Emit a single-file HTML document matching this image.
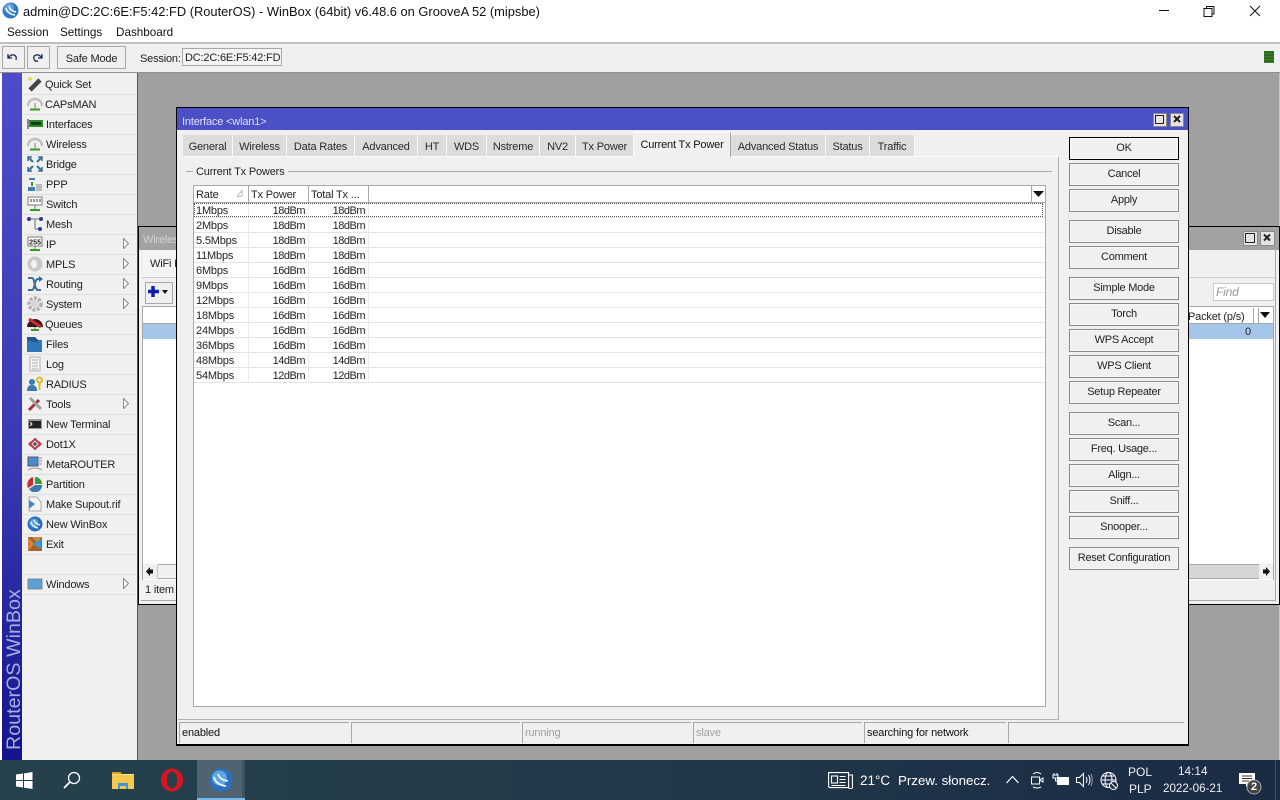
<!DOCTYPE html>
<html><head><meta charset="utf-8"><title>WinBox</title>
<style>
html,body{margin:0;padding:0;width:1280px;height:800px;overflow:hidden;background:#fff}
body{position:relative;font:11px/14px "Liberation Sans",sans-serif;color:#1a1a1a;letter-spacing:-.18px}
div,svg{position:absolute}
.t{white-space:nowrap;line-height:14px;height:14px}
.m{left:46px;margin-top:1px;white-space:nowrap;height:14px;line-height:14px;font-size:11px;color:#222}
.s{left:24px;width:112px;height:1px;background:#dedede}
.i{left:26px;width:16px;height:16px}
.ar{left:123px;width:6px;height:11px}
.b{left:1069px;width:108px;height:21px;border:1px solid #8a8a8a;text-align:center;line-height:21px;font-size:11px;letter-spacing:-.25px;background:#f0f0f0;color:#222;box-shadow:inset 0 0 0 1px #f8f8f8}
.tab{top:135px;height:21px;background:#dcdcdc;border-right:1px solid #fafafa;text-align:center;line-height:24px;font-size:11px;color:#2a2a2a;box-sizing:border-box}
.r{left:196px;margin-top:1px;white-space:nowrap;height:14px;line-height:14px;color:#222}
.p{margin-top:1px;white-space:nowrap;height:14px;line-height:14px;text-align:right;width:50px;color:#222;letter-spacing:-.5px}
.l{left:194px;width:851px;height:1px;background:#e4e4e4}
.h{top:186px;height:16px;background:#fff;border-right:1px solid #a8a8a8;box-sizing:border-box;line-height:19px;padding-left:2px;color:#222;white-space:nowrap;overflow:hidden}
.st{top:722px;height:21px;border-left:1px solid #a8a8a8;border-top:1px solid #a8a8a8;box-sizing:border-box;line-height:19px;padding-left:2px;white-space:nowrap;color:#111}
.tw{color:#fff;white-space:nowrap;height:16px;line-height:16px;letter-spacing:0}
</style></head><body>

<!-- title bar -->
<svg style="left:2px;top:2px" width="17" height="17" viewBox="0 0 17 17"><circle cx="8.500" cy="8.500" r="8" fill="#2f78c4"/><circle cx="7" cy="6" r="5" fill="#5fa4e0"/><path d="M4 6q1 6 9 7M7 4q1 5 7 6" stroke="#fff" stroke-width="1.400" fill="none"/></svg>
<div class="t" style="left:23px;top:5px;font-size:12.870px;letter-spacing:0;color:#111">admin@DC:2C:6E:F5:42:FD (RouterOS) - WinBox (64bit) v6.48.6 on GrooveA 52 (mipsbe)</div>
<svg style="left:1159px;top:5px" width="110" height="14" viewBox="0 0 110 14" fill="none" stroke="#111"><path d="M0 5.500H10"/><path d="M45 3.500h8v8h-8zM47.500 3V1.500h7.500v7.500h-1.500"/><path d="M91 1l10 10M101 1L91 11"/></svg>
<div class="t" style="left:7px;top:26px;font-size:11.700px;letter-spacing:0;color:#111">Session</div>
<div class="t" style="left:60px;top:26px;font-size:11.700px;letter-spacing:0;color:#111">Settings</div>
<div class="t" style="left:116px;top:26px;font-size:11.700px;letter-spacing:0;color:#111">Dashboard</div>

<!-- toolbar -->
<div style="left:0;top:42px;width:1280px;height:2px;background:#c0c0c0"></div>
<div style="left:0;top:44px;width:1280px;height:28px;background:#f0f0f0"></div>
<div style="left:0;top:72px;width:1280px;height:1px;background:#909090"></div>
<div style="left:2px;top:46px;width:21px;height:21px;border:1px solid #a8a8a8"></div>
<div style="left:27px;top:46px;width:21px;height:21px;border:1px solid #a8a8a8"></div>
<svg style="left:6px;top:51px" width="40" height="12" viewBox="0 0 40 12" fill="none" stroke="#1c2a5c" stroke-width="1.300"><path d="M2 3v4h4M2 7q3-4 6-3t2 5"/><path d="M32 7h4V3M36 7q-3-4-6-3t-2 4 4 2"/></svg>
<div style="left:57px;top:46px;width:67px;height:21px;border:1px solid #a8a8a8;text-align:center;line-height:24px;font-size:11px;color:#222">Safe Mode</div>
<div class="t" style="left:140px;top:52px;color:#222">Session:</div>
<div style="left:182px;top:48px;width:96px;height:16px;border:1px solid #a8a8a8;background:#f4f4f4;line-height:18px;padding-left:2px;color:#222;white-space:nowrap">DC:2C:6E:F5:42:FD</div>
<div style="left:1264px;top:51px;width:10px;height:12px;background:repeating-linear-gradient(#2e6b1e 0,#2e6b1e 2px,#3f7d2c 2px,#3f7d2c 3px)"></div>

<!-- left -->
<div style="left:0;top:73px;width:2px;height:687px;background:#fff"></div>
<div style="left:2px;top:73px;width:20px;height:687px;background:linear-gradient(#4c4cc8 0,#3a3ab4 55%,#14148c 100%)"></div>
<div style="left:22px;top:73px;width:115px;height:687px;background:#f0f0f0"></div>
<div style="left:137px;top:73px;width:1px;height:687px;background:#555"></div>
<div style="left:-76px;top:648px;width:180px;height:24px;line-height:24px;font-size:19.700px;letter-spacing:0;color:#a6aee0;transform:rotate(-90deg);text-align:left;white-space:nowrap">RouterOS WinBox</div>

<!-- desktop -->
<div style="left:138px;top:73px;width:1142px;height:687px;background:#a0a0a0"></div>
<div style="left:1279px;top:73px;width:1px;height:687px;background:#c8c8c8"></div>

<!-- menu -->
<div class="s" style="top:94px"></div><div class="s" style="top:114px"></div><div class="s" style="top:134px"></div><div class="s" style="top:154px"></div><div class="s" style="top:174px"></div><div class="s" style="top:194px"></div><div class="s" style="top:214px"></div><div class="s" style="top:234px"></div><div class="s" style="top:254px"></div><div class="s" style="top:274px"></div><div class="s" style="top:294px"></div><div class="s" style="top:314px"></div><div class="s" style="top:334px"></div><div class="s" style="top:354px"></div><div class="s" style="top:374px"></div><div class="s" style="top:394px"></div><div class="s" style="top:414px"></div><div class="s" style="top:434px"></div><div class="s" style="top:454px"></div><div class="s" style="top:474px"></div><div class="s" style="top:494px"></div><div class="s" style="top:514px"></div><div class="s" style="top:534px"></div><div class="s" style="top:554px"></div><div class="s" style="top:574px"></div><div class="s" style="top:594px"></div>

<div class="m" style="top:77px;left:45px">Quick Set</div>
<div class="m" style="top:97px;left:45px">CAPsMAN</div>
<div class="m" style="top:117px">Interfaces</div>
<div class="m" style="top:137px">Wireless</div>
<div class="m" style="top:157px">Bridge</div>
<div class="m" style="top:177px">PPP</div>
<div class="m" style="top:197px">Switch</div>
<div class="m" style="top:217px">Mesh</div>
<div class="m" style="top:237px">IP</div>
<div class="m" style="top:257px">MPLS</div>
<div class="m" style="top:277px">Routing</div>
<div class="m" style="top:297px">System</div>
<div class="m" style="top:317px;left:45px">Queues</div>
<div class="m" style="top:337px">Files</div>
<div class="m" style="top:357px">Log</div>
<div class="m" style="top:377px">RADIUS</div>
<div class="m" style="top:397px">Tools</div>
<div class="m" style="top:417px">New Terminal</div>
<div class="m" style="top:437px">Dot1X</div>
<div class="m" style="top:457px">MetaROUTER</div>
<div class="m" style="top:477px">Partition</div>
<div class="m" style="top:497px">Make Supout.rif</div>
<div class="m" style="top:517px">New WinBox</div>
<div class="m" style="top:537px">Exit</div>
<div class="m" style="top:577px">Windows</div>

<svg class="ar" style="top:238px" viewBox="0 0 6 11"><path d="M.5.500l5 5-5 5z" fill="#fff" stroke="#888"/></svg>
<svg class="ar" style="top:258px" viewBox="0 0 6 11"><path d="M.5.500l5 5-5 5z" fill="#fff" stroke="#888"/></svg>
<svg class="ar" style="top:278px" viewBox="0 0 6 11"><path d="M.5.500l5 5-5 5z" fill="#fff" stroke="#888"/></svg>
<svg class="ar" style="top:298px" viewBox="0 0 6 11"><path d="M.5.500l5 5-5 5z" fill="#fff" stroke="#888"/></svg>
<svg class="ar" style="top:398px" viewBox="0 0 6 11"><path d="M.5.500l5 5-5 5z" fill="#fff" stroke="#888"/></svg>
<svg class="ar" style="top:578px" viewBox="0 0 6 11"><path d="M.5.500l5 5-5 5z" fill="#fff" stroke="#888"/></svg>

<!-- menu icons -->
<svg class="i" style="top:76px;left:27px" viewBox="0 0 16 16"><path d="M3 14L13 4" stroke="#444" stroke-width="4.500"/><path d="M3 0l1 2 2 1-2 1-1 2-1-2-2-1 2-1z" fill="#e8d840"/></svg>
<svg class="i" style="top:96px;left:27px" viewBox="0 0 16 16" fill="none"><path d="M1 10a7 7 0 0 1 14 0" stroke="#c0c0c0" stroke-width="2.500"/><path d="M8 7v6" stroke="#777"/><path d="M3 13.500h10" stroke="#3a9a2a" stroke-width="2"/></svg>
<svg class="i" style="top:116px;left:27px" viewBox="0 0 16 16"><rect x="0" y="3" width="2" height="10" fill="#888"/><rect x="2" y="4" width="14" height="7" fill="#2f8a2a"/><rect x="4" y="6" width="10" height="3" fill="#143f14"/></svg>
<svg class="i" style="top:136px;left:27px" viewBox="0 0 16 16" fill="none"><path d="M1 10a7 7 0 0 1 14 0" stroke="#c0c0c0" stroke-width="2.500"/><path d="M8 7v6" stroke="#777"/><path d="M3 13.500h10" stroke="#3a9a2a" stroke-width="2"/></svg>
<svg class="i" style="top:156px;left:27px" viewBox="0 0 16 16" fill="none" stroke="#3f6f96" stroke-width="2.200"><path d="M1 1l5 5M15 1l-5 5M1 15l5-5M15 15l-5-5"/><path d="M1 5V1h4M15 5V1h-4M1 11v4h4M15 11v4h-4" stroke-width="1.500"/></svg>
<svg class="i" style="top:176px;left:27px" viewBox="0 0 16 16"><path d="M2 3h6" stroke="#3f7fb8" stroke-width="2"/><path d="M5 6v4" stroke="#3a9a2a" stroke-width="2"/><rect x="1" y="11" width="7" height="4" fill="#3f7fb8"/><rect x="9" y="8" width="6" height="7" fill="#bbb"/></svg>
<svg class="i" style="top:196px;left:27px" viewBox="0 0 16 16"><rect x="1" y="1" width="14" height="8" fill="#fff" stroke="#777"/><path d="M4 3v3M7 3v3M10 3v3M13 3v3" stroke="#333"/><path d="M8 9v4" stroke="#777"/><path d="M3 14h10" stroke="#3a9a2a" stroke-width="2"/></svg>
<svg class="i" style="top:216px;left:27px" viewBox="0 0 16 16"><path d="M3 3h10M8 3v10M8 13h5" stroke="#999" stroke-width="1.500" fill="none"/><circle cx="2" cy="3" r="2" fill="#2a3a90"/><circle cx="14" cy="3" r="2" fill="#2a3a90"/><circle cx="13" cy="13" r="2" fill="#2a3a90"/></svg>
<svg class="i" style="top:236px;left:27px" viewBox="0 0 16 16"><rect x="1" y="1" width="14" height="9" fill="#fff" stroke="#777"/><text x="8" y="8.500" font-family="Liberation Mono" font-size="7" font-weight="bold" text-anchor="middle" fill="#222">255</text><path d="M8 10v3" stroke="#777"/><path d="M3 14h10" stroke="#3a9a2a" stroke-width="2"/></svg>
<svg class="i" style="top:256px;left:27px" viewBox="0 0 16 16"><circle cx="8" cy="8" r="7.500" fill="#c8c8c8"/><ellipse cx="7" cy="8" rx="3" ry="4.500" fill="#f2f2f2"/></svg>
<svg class="i" style="top:276px;left:27px" viewBox="0 0 16 16" fill="none" stroke="#3f6f96" stroke-width="2"><path d="M1 2h4c3 0 2 12 6 12h3M1 14h4c3 0 2-11 6-11h3"/><path d="M12 0l4 3-4 3z" fill="#2a6a96" stroke="none"/></svg>
<svg class="i" style="top:296px;left:27px" viewBox="0 0 16 16"><circle cx="8" cy="8" r="6" fill="none" stroke="#b0b0b0" stroke-width="3.500" stroke-dasharray="3 1.500"/><circle cx="8" cy="8" r="4" fill="#d8d8d8"/></svg>
<svg class="i" style="top:316px;left:27px" viewBox="0 0 16 16"><path d="M0 11a8 8 0 0 1 16 0z" fill="#3a1818"/><path d="M2 3l12 8" stroke="#c83030" stroke-width="3"/><path d="M8 11v2" stroke="#777"/><path d="M4 14h8" stroke="#3a9a2a" stroke-width="2"/></svg>
<svg class="i" style="top:336px;left:27px" viewBox="0 0 16 16"><path d="M0 1h8l3 3h4v12H0z" fill="#2f78b8"/><path d="M0 1h8l3 3v3L3 5H0z" fill="#1f5a94"/></svg>
<svg class="i" style="top:356px;left:27px" viewBox="0 0 16 16"><rect x="3" y="1" width="10" height="14" fill="#f4f4f4" stroke="#b0b0b0"/><path d="M5 4h6M5 7h6M5 10h6M5 13h6" stroke="#b0b0b0"/></svg>
<svg class="i" style="top:376px;left:27px" viewBox="0 0 16 16"><circle cx="5" cy="6" r="3" fill="#3a7ab0"/><path d="M0 15q0-6 5-6t5 6z" fill="#3a7ab0"/><circle cx="12.500" cy="4" r="2.500" fill="none" stroke="#e0b820" stroke-width="2"/><path d="M12.500 7v7" stroke="#e0b820" stroke-width="2"/></svg>
<svg class="i" style="top:396px;left:27px" viewBox="0 0 16 16"><path d="M2 14L12 4" stroke="#9a3040" stroke-width="3"/><path d="M3 2l11 11" stroke="#a0a0a0" stroke-width="3"/></svg>
<svg class="i" style="top:416px;left:27px" viewBox="0 0 16 16"><rect x="1" y="3" width="14" height="10" fill="#999"/><rect x="2" y="5" width="12" height="7" fill="#222"/><path d="M3 6l2 2-2 2" stroke="#fff" fill="none"/></svg>
<svg class="i" style="top:436px;left:27px" viewBox="0 0 16 16"><path d="M8 3l5 5-5 5-5-5z" fill="none" stroke="#c03a4a" stroke-width="2"/><path d="M1 8l3-3v6zM15 8l-3-3v6z" fill="#c03a4a"/><circle cx="8" cy="8" r="1.800" fill="#555"/></svg>
<svg class="i" style="top:456px;left:27px" viewBox="0 0 16 16"><rect x="1" y="1" width="10" height="9" fill="#4a8ac8" stroke="#557"/><path d="M12 2h3M12 5h3M12 8h3" stroke="#888"/><path d="M1 14q7-4 14 0" stroke="#999" fill="none"/></svg>
<svg class="i" style="top:476px;left:27px" viewBox="0 0 16 16"><path d="M6 1A8 8 0 0 0 1 12l5-3z" fill="#c83030"/><path d="M8 1v7h7A7 7 0 0 0 8 1z" fill="#3a9a3a"/><path d="M2 13l6-4h7a7 7 0 0 1-13 4z" fill="#3a7ab0"/></svg>
<svg class="i" style="top:496px;left:27px" viewBox="0 0 16 16"><path d="M2 1h8l4 5v9H2z" fill="#f4f4f4" stroke="#aaa"/><path d="M2 4l6 4-6 5z" fill="#3a8ac8"/></svg>
<svg class="i" style="top:516px;left:27px" viewBox="0 0 16 16"><circle cx="8" cy="8" r="7.500" fill="#2f6fb8"/><circle cx="7" cy="7" r="4.500" fill="#5fa4e0"/><path d="M4 6q1 5 7 6M7 4q1 4 6 5" stroke="#fff" stroke-width="1.200" fill="none"/></svg>
<svg class="i" style="top:536px;left:27px" viewBox="0 0 16 16"><rect x="1" y="1" width="14" height="14" fill="#a8602a"/><path d="M1 1l6 7-6 7zM15 1H5l5 5z" fill="#d08a40"/><path d="M6 8l8-5v10z" fill="#3a9ad8"/></svg>
<svg class="i" style="top:576px;left:27px" viewBox="0 0 16 16"><rect x="1" y="3" width="14" height="10" fill="#5aa0d8" stroke="#888"/></svg>

<!-- wireless window behind -->
<div style="left:138px;top:226px;width:1142px;height:379px;background:#000"></div>
<div style="left:139px;top:227px;width:1140px;height:23px;background:#a2a2a2"></div>
<div style="left:139px;top:250px;width:1140px;height:354px;background:#f0f0f0"></div>
<div class="t" style="left:143px;top:233px;color:#d4d4d4;font-size:11px">Wireless</div>
<div style="left:143px;top:250px;width:33px;height:27px;background:#f4f4f4"></div>
<div class="t" style="left:150px;top:257px;color:#222">WiFi Interfaces</div>
<div style="left:142px;top:277px;width:1133px;height:1px;background:#ccc"></div>
<div style="left:145px;top:282px;width:26px;height:20px;border:1px solid #a8a8a8"></div>
<svg style="left:147px;top:284px" width="22" height="16" viewBox="0 0 22 16"><path d="M6 2v11M1 7.500h11" stroke="#0f1fa8" stroke-width="3.500"/><path d="M15 6h6l-3 4z" fill="#111"/></svg>
<div style="left:1213px;top:283px;width:59px;height:16px;border:1px solid #c8c8c8;background:#fff"></div>
<div class="t" style="left:1216px;top:285px;color:#999;font-style:italic;font-size:12px">Find</div>
<div style="left:143px;top:307px;width:1130px;height:273px;background:#fff;box-shadow:0 0 0 1px #a8a8a8"></div>
<div style="left:143px;top:323px;width:1130px;height:1px;background:#a8a8a8"></div>
<div style="left:143px;top:324px;width:1130px;height:15px;background:#a6c5ea"></div>
<div class="t" style="left:1188px;top:310px;color:#222">Packet (p/s)</div>
<div style="left:1253px;top:308px;width:1px;height:15px;background:#a8a8a8"></div>
<div style="left:1258px;top:308px;width:1px;height:15px;background:#a8a8a8"></div>
<svg style="left:1260px;top:312px" width="12" height="7"><path d="M0 0h10L5 6z" fill="#111"/></svg>
<div class="t" style="left:1245px;top:325px;color:#222">0</div>
<div style="left:143px;top:564px;width:1130px;height:15px;background:#d6d6d6;border-top:1px solid #a8a8a8;border-bottom:1px solid #a8a8a8;box-sizing:border-box"></div>
<div style="left:143px;top:564px;width:15px;height:15px;background:#f0f0f0"></div>
<div style="left:158px;top:565px;width:20px;height:13px;background:#f0f0f0"></div>
<div style="left:157px;top:565px;width:1px;height:13px;background:#c8c8c8"></div>
<div style="left:1259px;top:564px;width:14px;height:15px;background:#f0f0f0"></div>
<svg style="left:146px;top:567px" width="8" height="9"><path d="M0 4.500L4 0v2.500h3v4H4V9z" fill="#111"/></svg>
<svg style="left:1262px;top:567px" width="8" height="9"><path d="M8 4.500L4 0v2.500H1v4h3V9z" fill="#111"/></svg>
<div style="left:142px;top:580px;width:1133px;height:20px;background:#f0f0f0"></div>
<div class="t" style="left:145px;top:583px;color:#222">1 item</div>
<div style="left:1275px;top:250px;width:1px;height:351px;background:#a8a8a8"></div>
<div style="left:141px;top:600px;width:1135px;height:1px;background:#a8a8a8"></div>
<div style="left:1243px;top:231px;width:13px;height:13px;border:1px solid #888;background:#e4e4e4"></div>
<div style="left:1260px;top:231px;width:13px;height:13px;border:1px solid #888;background:#e4e4e4"></div>
<svg style="left:1245px;top:233px" width="28" height="11" fill="none" stroke="#222"><rect x="0.500" y="0.500" width="9" height="9"/><path d="M19 1.500l6 6M25 1.500l-6 6" stroke-width="2"/></svg>

<!-- main dialog -->
<div style="left:176px;top:107px;width:1013px;height:639px;background:#000"></div>
<div style="left:177px;top:108px;width:1011px;height:22px;background:#4c50c6"></div>
<div style="left:177px;top:130px;width:1011px;height:614px;background:#f0f0f0"></div>
<div class="t" style="left:182px;top:115px;color:#dfe0f8">Interface &lt;wlan1&gt;</div>
<div style="left:1153px;top:113px;width:12px;height:12px;border:1px solid #888;background:#e4e4e4"></div>
<div style="left:1170px;top:113px;width:12px;height:12px;border:1px solid #888;background:#e4e4e4"></div>
<svg style="left:1155px;top:115px" width="28" height="10" fill="none" stroke="#222"><rect x="0.500" y="0.500" width="8" height="8"/><path d="M19 1l6 6M25 1l-6 6" stroke-width="2"/></svg>

<!-- tabs -->
<div class="tab" style="left:183px;width:50px">General</div>
<div class="tab" style="left:233px;width:54px">Wireless</div>
<div class="tab" style="left:287px;width:68px">Data Rates</div>
<div class="tab" style="left:355px;width:63px">Advanced</div>
<div class="tab" style="left:418px;width:29px">HT</div>
<div class="tab" style="left:447px;width:40px">WDS</div>
<div class="tab" style="left:487px;width:53px">Nstreme</div>
<div class="tab" style="left:540px;width:36px">NV2</div>
<div class="tab" style="left:576px;width:58px">Tx Power</div>
<div class="tab" style="left:634px;width:97px;top:132px;height:25px;background:#f0f0f0;line-height:25px;color:#111;border-right:1px solid #a8a8a8;border-top:1px solid #fff">Current Tx Power</div>
<div class="tab" style="left:731px;width:95px">Advanced Status</div>
<div class="tab" style="left:826px;width:44px">Status</div>
<div class="tab" style="left:870px;width:45px">Traffic</div>

<!-- panel -->
<div style="left:180px;top:156px;width:454px;height:1px;background:#fafafa"></div>
<div style="left:731px;top:156px;width:327px;height:1px;background:#fafafa"></div>
<div style="left:1058px;top:157px;width:1px;height:562px;background:#b0b0b0"></div>
<div style="left:178px;top:719px;width:881px;height:1px;background:#b0b0b0"></div>
<div style="left:186px;top:171px;width:7px;height:1px;background:#a8a8a8"></div>
<div class="t" style="left:196px;top:165px;color:#222">Current Tx Powers</div>
<div style="left:288px;top:171px;width:764px;height:1px;background:#a8a8a8"></div>

<!-- table -->
<div style="left:193px;top:185px;width:851px;height:520px;border:1px solid #a8a8a8;background:#fff"></div>
<div style="left:194px;top:202px;width:851px;height:1px;background:#a8a8a8"></div>
<div class="h" style="left:194px;width:55px">Rate</div>
<svg style="left:237px;top:190px" width="7" height="7"><path d="M0 6.500L5 .5v6z" fill="#fff" stroke="#aaa" stroke-width=".8"/></svg>
<div class="h" style="left:249px;width:60px">Tx Power</div>
<div class="h" style="left:309px;width:60px">Total Tx ...</div>
<div style="left:1031px;top:186px;width:1px;height:16px;background:#a8a8a8"></div>
<svg style="left:1033px;top:191px" width="12" height="7"><path d="M0 0h11L5.500 6z" fill="#111"/></svg>

<div class="l" style="top:217px"></div><div class="l" style="top:232px"></div><div class="l" style="top:247px"></div><div class="l" style="top:262px"></div><div class="l" style="top:277px"></div><div class="l" style="top:292px"></div><div class="l" style="top:307px"></div><div class="l" style="top:322px"></div><div class="l" style="top:337px"></div><div class="l" style="top:352px"></div><div class="l" style="top:367px"></div><div class="l" style="top:382px"></div>
<div style="left:248px;top:203px;width:1px;height:179px;background:#ececec"></div>
<div style="left:308px;top:203px;width:1px;height:179px;background:#ececec"></div>
<div style="left:368px;top:203px;width:1px;height:179px;background:#ececec"></div>
<div style="left:194px;top:203px;width:849px;height:14px;border:1px dotted #555;box-sizing:border-box"></div>

<div class="r" style="top:203px">1Mbps</div><div class="p" style="left:255px;top:203px">18dBm</div><div class="p" style="left:315px;top:203px">18dBm</div>
<div class="r" style="top:218px">2Mbps</div><div class="p" style="left:255px;top:218px">18dBm</div><div class="p" style="left:315px;top:218px">18dBm</div>
<div class="r" style="top:233px">5.5Mbps</div><div class="p" style="left:255px;top:233px">18dBm</div><div class="p" style="left:315px;top:233px">18dBm</div>
<div class="r" style="top:248px">11Mbps</div><div class="p" style="left:255px;top:248px">18dBm</div><div class="p" style="left:315px;top:248px">18dBm</div>
<div class="r" style="top:263px">6Mbps</div><div class="p" style="left:255px;top:263px">16dBm</div><div class="p" style="left:315px;top:263px">16dBm</div>
<div class="r" style="top:278px">9Mbps</div><div class="p" style="left:255px;top:278px">16dBm</div><div class="p" style="left:315px;top:278px">16dBm</div>
<div class="r" style="top:293px">12Mbps</div><div class="p" style="left:255px;top:293px">16dBm</div><div class="p" style="left:315px;top:293px">16dBm</div>
<div class="r" style="top:308px">18Mbps</div><div class="p" style="left:255px;top:308px">16dBm</div><div class="p" style="left:315px;top:308px">16dBm</div>
<div class="r" style="top:323px">24Mbps</div><div class="p" style="left:255px;top:323px">16dBm</div><div class="p" style="left:315px;top:323px">16dBm</div>
<div class="r" style="top:338px">36Mbps</div><div class="p" style="left:255px;top:338px">16dBm</div><div class="p" style="left:315px;top:338px">16dBm</div>
<div class="r" style="top:353px">48Mbps</div><div class="p" style="left:255px;top:353px">14dBm</div><div class="p" style="left:315px;top:353px">14dBm</div>
<div class="r" style="top:368px">54Mbps</div><div class="p" style="left:255px;top:368px">12dBm</div><div class="p" style="left:315px;top:368px">12dBm</div>

<!-- buttons -->
<div class="b" style="top:137px;border-color:#000">OK</div>
<div class="b" style="top:163px">Cancel</div>
<div class="b" style="top:189px">Apply</div>
<div class="b" style="top:220px">Disable</div>
<div class="b" style="top:246px">Comment</div>
<div class="b" style="top:277px">Simple Mode</div>
<div class="b" style="top:303px">Torch</div>
<div class="b" style="top:329px">WPS Accept</div>
<div class="b" style="top:355px">WPS Client</div>
<div class="b" style="top:381px">Setup Repeater</div>
<div class="b" style="top:412px">Scan...</div>
<div class="b" style="top:438px">Freq. Usage...</div>
<div class="b" style="top:464px">Align...</div>
<div class="b" style="top:490px">Sniff...</div>
<div class="b" style="top:516px">Snooper...</div>
<div class="b" style="top:547px">Reset Configuration</div>

<!-- status -->
<div class="st" style="left:179px;width:170px;line-height:20px">enabled</div>
<div class="st" style="left:351px;width:169px"></div>
<div class="st" style="left:522px;width:169px;color:#a0a0a0;line-height:20px">running</div>
<div class="st" style="left:693px;width:169px;color:#a0a0a0;line-height:20px">slave</div>
<div class="st" style="left:864px;width:142px;line-height:20px">searching for network</div>
<div class="st" style="left:1008px;width:176px"></div>

<!-- taskbar -->
<div style="left:0;top:760px;width:1280px;height:40px;background:linear-gradient(90deg,#25414b 0,#23394a 50%,#1a2b44 100%)"></div>
<div style="left:197px;top:760px;width:48px;height:40px;background:#4f6470"></div>
<div style="left:197px;top:798px;width:48px;height:2px;background:#76b9ed"></div>
<div style="left:242px;top:760px;width:3px;height:38px;background:#3c525e"></div>
<svg style="left:16px;top:772px" width="17" height="17" viewBox="0 0 17 17" fill="#fff"><path d="M0 2.500L7 1.500V8H0zM8 1.400L16.500 0V8H8zM0 9h7v6.500l-7-1zM8 9h8.500v8L8 15.600z"/></svg>
<svg style="left:63px;top:771px" width="18" height="18" viewBox="0 0 18 18" fill="none" stroke="#fff" stroke-width="1.300"><circle cx="11" cy="7" r="5.500"/><path d="M7 11l-6 6" stroke-width="1.800"/></svg>
<svg style="left:112px;top:771px" width="22" height="18" viewBox="0 0 22 18"><path d="M0 1h8l2 2h12v15H0z" fill="#f6c94e"/><rect x="0" y="1" width="9" height="3" fill="#d8a020"/><path d="M6 18v-6h10v6h-2v-3H8v3z" fill="#3f94d8"/><rect x="0" y="3" width="22" height="1" fill="#fde38a"/></svg>
<svg style="left:160px;top:768px" width="24" height="24" viewBox="0 0 24 24"><ellipse cx="12" cy="12" rx="11" ry="11.500" fill="#d8121f"/><ellipse cx="12" cy="12" rx="5" ry="8.500" fill="#25414b"/></svg>
<svg style="left:209px;top:768px" width="24" height="24" viewBox="0 0 24 24"><circle cx="12" cy="12" r="11.500" fill="#2a6fc0"/><circle cx="10.500" cy="10" r="7.500" fill="#5ea6e4"/><path d="M5 9q2 8 12 9M9 6q2 6 10 7" stroke="#fff" stroke-width="1.600" fill="none"/></svg>

<!-- tray -->
<svg style="left:828px;top:772px" width="25" height="17" viewBox="0 0 25 17" fill="none" stroke="#fff" stroke-width="1.100"><path d="M.6.600h20v15H2a1.500 1.500 0 0 1-1.400-1.500zM20.600 3h3.800v11a1.500 1.500 0 0 1-3.800 1.600"/><rect x="3.500" y="4" width="6" height="7"/><path d="M11.500 4.500h6M11.500 7.500h6M11.500 10.500h6M3.500 13.500h14"/></svg>
<div class="tw" style="left:860px;top:773px;font-size:13.500px">21°C</div>
<div class="tw" style="left:898px;top:773px;font-size:13.300px">Przew. słonecz.</div>
<svg style="left:1006px;top:775px" width="13" height="9" fill="none" stroke="#fff" stroke-width="1.200"><path d="M.5 8L6.500 1.500 12.500 8"/></svg>
<svg style="left:1031px;top:771px" width="14" height="18" viewBox="0 0 14 18" fill="none" stroke="#fff"><path d="M2 3q4-3 8 0M2 16q4 2 8 0"/><rect x=".5" y="6" width="8" height="7"/><path d="M9 8.500l3-1.500v4l-3-1.500"/></svg>
<svg style="left:1052px;top:773px" width="18" height="14" viewBox="0 0 18 14" fill="none" stroke="#fff"><rect x="5.500" y="4.500" width="11" height="7" fill="#fff"/><path d="M1 2h5v3H1zM3.500 5v3h3M2 0v2M5 0v2"/></svg>
<svg style="left:1076px;top:772px" width="17" height="16" viewBox="0 0 17 16" fill="none" stroke="#fff"><path d="M.5 5.500h3l4-4v13l-4-4h-3z"/><path d="M10 5q2 3 0 6M12.500 3q3 5 0 10"/><path d="M15 2q2.500 6 0 12" stroke="#99a"/></svg>
<svg style="left:1100px;top:772px" width="19" height="19" viewBox="0 0 19 19" fill="none" stroke="#fff"><circle cx="8.500" cy="8" r="7.500"/><ellipse cx="8.500" cy="8" rx="3.500" ry="7.500"/><path d="M1 8h15M2 4h13M2 12h13"/><circle cx="13.500" cy="13.500" r="4" fill="#1c2c44"/><path d="M11 11l5 5"/></svg>
<div class="tw" style="left:1128px;top:764px;font-size:12px;color:#f0f0f0">POL</div>
<div class="tw" style="left:1129px;top:781px;font-size:12px;color:#f0f0f0">PLP</div>
<div class="tw" style="left:1178px;top:763px;font-size:11.800px;color:#f0f0f0">14:14</div>
<div class="tw" style="left:1163px;top:781px;font-size:11.600px;color:#f0f0f0">2022-06-21</div>
<svg style="left:1238px;top:772px" width="26" height="24" viewBox="0 0 26 24"><path d="M1 1h16v11h-6l-3 3v-3H1z" fill="#fff"/><path d="M4 4h10M4 6.500h10M4 9h7" stroke="#333"/><circle cx="16" cy="15" r="7" fill="#444" stroke="#aaa"/></svg>
<div class="t" style="left:1251px;top:780px;color:#fff;font-size:11px;font-weight:bold">2</div>
<div style="left:1275px;top:760px;width:1px;height:40px;background:#3c525e"></div>

</body></html>
